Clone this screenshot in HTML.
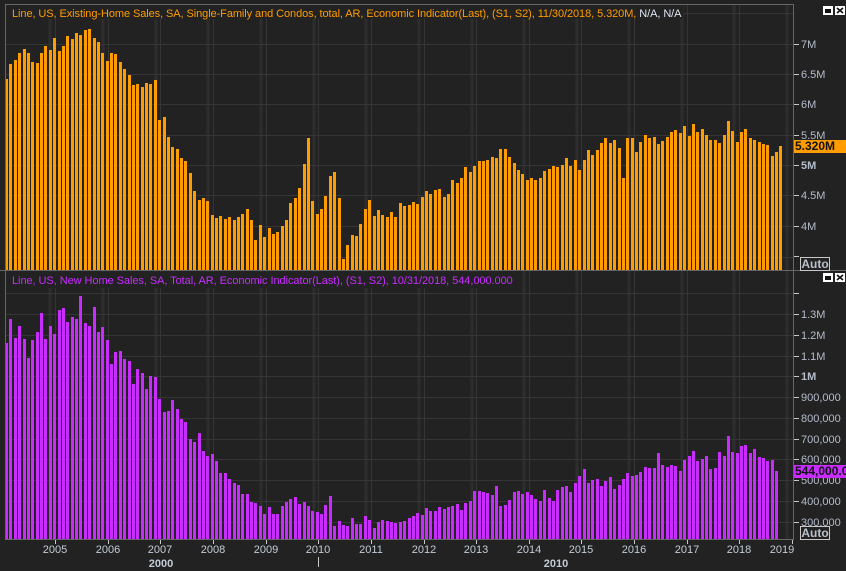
<!DOCTYPE html>
<html><head><meta charset="utf-8"><style>
html,body{margin:0;padding:0;background:#222}
body{width:846px;height:567px;position:relative;overflow:hidden;font:11px "Liberation Sans",sans-serif;color:#b4bccb}
svg{position:absolute;left:0;top:0}
.b{position:absolute;left:5.014px;top:0;display:flex;width:800px}
.b i{display:block;flex:none;width:4.386px;box-sizing:border-box;border-left:3px solid}
.o i{border-color:#ff9c00}.p i{border-color:#c82cff}
.t{position:absolute;white-space:pre;line-height:13px;background:#222;padding-right:2px}
.l{position:absolute;left:801px;white-space:pre;line-height:13px}
.y{position:absolute;top:544px;width:40px;text-align:center;line-height:13px;color:#c3ccd6}
.m{position:absolute;top:558px;width:40px;text-align:center;line-height:13px;font-weight:bold;color:#c3ccd6}
.tag{position:absolute;left:794px;width:51px;height:13px;overflow:hidden;line-height:13px;color:#111;font-weight:bold;font-size:12px;white-space:pre;padding-left:1px}
.au{position:absolute;left:800px;width:28px;height:12px;border:1px solid #c8c8c8;line-height:12px;text-align:center;font-weight:bold;font-size:12px;color:#b9c1cc;background:#222}
</style></head><body>
<svg width="846" height="567" shape-rendering="crispEdges" fill="none">
<path stroke="#2d2d2d" stroke-width="3" d="M50 5V270M103 5V270M156 5V270M208 5V270M261 5V270M314 5V270M366 5V270M419 5V270M472 5V270M524 5V270M577 5V270M629 5V270M682 5V270M734 5V270M787 5V270M50 271V539M103 271V539M156 271V539M208 271V539M261 271V539M314 271V539M366 271V539M419 271V539M472 271V539M524 271V539M577 271V539M629 271V539M682 271V539M734 271V539M787 271V539"/>
<path stroke="#353535" d="M55.5 5V539M108.5 5V539M160.5 5V539M213.5 5V539M266.5 5V539M318.5 5V539M371.5 5V539M424.5 5V539M476.5 5V539M529.5 5V539M581.5 5V539M634.5 5V539M687.5 5V539M739.5 5V539M6 13.5H793M6 44.5H793M6 74.5H793M6 104.5H793M6 135.5H793M6 165.5H793M6 195.5H793M6 226.5H793M6 257.5H793M6 293.5H793M6 314.5H793M6 335.5H793M6 356.5H793M6 376.5H793M6 397.5H793M6 418.5H793M6 439.5H793M6 459.5H793M6 480.5H793M6 501.5H793M6 522.5H793"/>
</svg>
<div class="t" style="left:5px;top:5px;height:14px;width:678px;padding:0"></div>
<div class="t" style="left:5px;top:272px;height:16px;width:510px;padding:0"></div>
<div class="b o" style="height:270px"><i style=margin-top:79px></i><i style=margin-top:64px></i><i style=margin-top:60px></i><i style=margin-top:53px></i><i style=margin-top:49px></i><i style=margin-top:53px></i><i style=margin-top:62px></i><i style=margin-top:63px></i><i style=margin-top:53px></i><i style=margin-top:46px></i><i style=margin-top:50px></i><i style=margin-top:38px></i><i style=margin-top:51px></i><i style=margin-top:46px></i><i style=margin-top:36px></i><i style=margin-top:39px></i><i style=margin-top:33px></i><i style=margin-top:35px></i><i style=margin-top:30px></i><i style=margin-top:29px></i><i style=margin-top:38px></i><i style=margin-top:42px></i><i style=margin-top:53px></i><i style=margin-top:61px></i><i style=margin-top:53px></i><i style=margin-top:54px></i><i style=margin-top:62px></i><i style=margin-top:69px></i><i style=margin-top:75px></i><i style=margin-top:85px></i><i style=margin-top:84px></i><i style=margin-top:87px></i><i style=margin-top:83px></i><i style=margin-top:84px></i><i style=margin-top:80px></i><i style=margin-top:120px></i><i style=margin-top:117px></i><i style=margin-top:137px></i><i style=margin-top:147px></i><i style=margin-top:149px></i><i style=margin-top:158px></i><i style=margin-top:161px></i><i style=margin-top:173px></i><i style=margin-top:191px></i><i style=margin-top:200px></i><i style=margin-top:198px></i><i style=margin-top:201px></i><i style=margin-top:215px></i><i style=margin-top:218px></i><i style=margin-top:216px></i><i style=margin-top:219px></i><i style=margin-top:217px></i><i style=margin-top:220px></i><i style=margin-top:217px></i><i style=margin-top:214px></i><i style=margin-top:209px></i><i style=margin-top:220px></i><i style=margin-top:240px></i><i style=margin-top:225px></i><i style=margin-top:237px></i><i style=margin-top:228px></i><i style=margin-top:234px></i><i style=margin-top:232px></i><i style=margin-top:226px></i><i style=margin-top:220px></i><i style=margin-top:203px></i><i style=margin-top:198px></i><i style=margin-top:188px></i><i style=margin-top:164px></i><i style=margin-top:138px></i><i style=margin-top:201px></i><i style=margin-top:214px></i><i style=margin-top:209px></i><i style=margin-top:196px></i><i style=margin-top:176px></i><i style=margin-top:172px></i><i style=margin-top:198px></i><i style=margin-top:259px></i><i style=margin-top:245px></i><i style=margin-top:235px></i><i style=margin-top:236px></i><i style=margin-top:224px></i><i style=margin-top:209px></i><i style=margin-top:200px></i><i style=margin-top:216px></i><i style=margin-top:210px></i><i style=margin-top:215px></i><i style=margin-top:217px></i><i style=margin-top:212px></i><i style=margin-top:217px></i><i style=margin-top:203px></i><i style=margin-top:206px></i><i style=margin-top:205px></i><i style=margin-top:202px></i><i style=margin-top:204px></i><i style=margin-top:197px></i><i style=margin-top:191px></i><i style=margin-top:194px></i><i style=margin-top:190px></i><i style=margin-top:189px></i><i style=margin-top:197px></i><i style=margin-top:194px></i><i style=margin-top:180px></i><i style=margin-top:183px></i><i style=margin-top:178px></i><i style=margin-top:167px></i><i style=margin-top:172px></i><i style=margin-top:166px></i><i style=margin-top:161px></i><i style=margin-top:161px></i><i style=margin-top:160px></i><i style=margin-top:157px></i><i style=margin-top:158px></i><i style=margin-top:149px></i><i style=margin-top:149px></i><i style=margin-top:157px></i><i style=margin-top:163px></i><i style=margin-top:170px></i><i style=margin-top:174px></i><i style=margin-top:180px></i><i style=margin-top:178px></i><i style=margin-top:180px></i><i style=margin-top:178px></i><i style=margin-top:171px></i><i style=margin-top:169px></i><i style=margin-top:166px></i><i style=margin-top:167px></i><i style=margin-top:165px></i><i style=margin-top:158px></i><i style=margin-top:166px></i><i style=margin-top:160px></i><i style=margin-top:170px></i><i style=margin-top:160px></i><i style=margin-top:150px></i><i style=margin-top:155px></i><i style=margin-top:150px></i><i style=margin-top:143px></i><i style=margin-top:138px></i><i style=margin-top:143px></i><i style=margin-top:140px></i><i style=margin-top:148px></i><i style=margin-top:178px></i><i style=margin-top:138px></i><i style=margin-top:138px></i><i style=margin-top:152px></i><i style=margin-top:142px></i><i style=margin-top:135px></i><i style=margin-top:138px></i><i style=margin-top:137px></i><i style=margin-top:144px></i><i style=margin-top:141px></i><i style=margin-top:137px></i><i style=margin-top:132px></i><i style=margin-top:130px></i><i style=margin-top:133px></i><i style=margin-top:126px></i><i style=margin-top:136px></i><i style=margin-top:124px></i><i style=margin-top:132px></i><i style=margin-top:129px></i><i style=margin-top:135px></i><i style=margin-top:140px></i><i style=margin-top:140px></i><i style=margin-top:143px></i><i style=margin-top:135px></i><i style=margin-top:121px></i><i style=margin-top:131px></i><i style=margin-top:142px></i><i style=margin-top:132px></i><i style=margin-top:129px></i><i style=margin-top:138px></i><i style=margin-top:140px></i><i style=margin-top:142px></i><i style=margin-top:144px></i><i style=margin-top:145px></i><i style=margin-top:156px></i><i style=margin-top:152px></i><i style=margin-top:146px></i></div>
<div class="b p" style="height:539px"><i style=margin-top:343px></i><i style=margin-top:319px></i><i style=margin-top:338px></i><i style=margin-top:326px></i><i style=margin-top:339px></i><i style=margin-top:358px></i><i style=margin-top:340px></i><i style=margin-top:332px></i><i style=margin-top:313px></i><i style=margin-top:339px></i><i style=margin-top:326px></i><i style=margin-top:334px></i><i style=margin-top:310px></i><i style=margin-top:308px></i><i style=margin-top:322px></i><i style=margin-top:317px></i><i style=margin-top:319px></i><i style=margin-top:296px></i><i style=margin-top:323px></i><i style=margin-top:326px></i><i style=margin-top:307px></i><i style=margin-top:332px></i><i style=margin-top:327px></i><i style=margin-top:340px></i><i style=margin-top:364px></i><i style=margin-top:352px></i><i style=margin-top:351px></i><i style=margin-top:359px></i><i style=margin-top:361px></i><i style=margin-top:384px></i><i style=margin-top:369px></i><i style=margin-top:373px></i><i style=margin-top:389px></i><i style=margin-top:376px></i><i style=margin-top:377px></i><i style=margin-top:399px></i><i style=margin-top:412px></i><i style=margin-top:411px></i><i style=margin-top:400px></i><i style=margin-top:409px></i><i style=margin-top:419px></i><i style=margin-top:422px></i><i style=margin-top:439px></i><i style=margin-top:442px></i><i style=margin-top:433px></i><i style=margin-top:451px></i><i style=margin-top:456px></i><i style=margin-top:454px></i><i style=margin-top:461px></i><i style=margin-top:473px></i><i style=margin-top:473px></i><i style=margin-top:479px></i><i style=margin-top:483px></i><i style=margin-top:485px></i><i style=margin-top:494px></i><i style=margin-top:494px></i><i style=margin-top:502px></i><i style=margin-top:503px></i><i style=margin-top:506px></i><i style=margin-top:514px></i><i style=margin-top:507px></i><i style=margin-top:514px></i><i style=margin-top:514px></i><i style=margin-top:506px></i><i style=margin-top:502px></i><i style=margin-top:499px></i><i style=margin-top:497px></i><i style=margin-top:504px></i><i style=margin-top:502px></i><i style=margin-top:506px></i><i style=margin-top:511px></i><i style=margin-top:512px></i><i style=margin-top:514px></i><i style=margin-top:505px></i><i style=margin-top:496px></i><i style=margin-top:526px></i><i style=margin-top:521px></i><i style=margin-top:525px></i><i style=margin-top:526px></i><i style=margin-top:518px></i><i style=margin-top:524px></i><i style=margin-top:524px></i><i style=margin-top:516px></i><i style=margin-top:520px></i><i style=margin-top:528px></i><i style=margin-top:522px></i><i style=margin-top:520px></i><i style=margin-top:521px></i><i style=margin-top:522px></i><i style=margin-top:523px></i><i style=margin-top:522px></i><i style=margin-top:521px></i><i style=margin-top:518px></i><i style=margin-top:516px></i><i style=margin-top:513px></i><i style=margin-top:515px></i><i style=margin-top:508px></i><i style=margin-top:511px></i><i style=margin-top:511px></i><i style=margin-top:507px></i><i style=margin-top:509px></i><i style=margin-top:507px></i><i style=margin-top:506px></i><i style=margin-top:504px></i><i style=margin-top:510px></i><i style=margin-top:503px></i><i style=margin-top:501px></i><i style=margin-top:491px></i><i style=margin-top:491px></i><i style=margin-top:492px></i><i style=margin-top:493px></i><i style=margin-top:495px></i><i style=margin-top:486px></i><i style=margin-top:506px></i><i style=margin-top:505px></i><i style=margin-top:500px></i><i style=margin-top:492px></i><i style=margin-top:491px></i><i style=margin-top:494px></i><i style=margin-top:492px></i><i style=margin-top:495px></i><i style=margin-top:499px></i><i style=margin-top:501px></i><i style=margin-top:490px></i><i style=margin-top:498px></i><i style=margin-top:501px></i><i style=margin-top:490px></i><i style=margin-top:487px></i><i style=margin-top:486px></i><i style=margin-top:492px></i><i style=margin-top:483px></i><i style=margin-top:476px></i><i style=margin-top:469px></i><i style=margin-top:483px></i><i style=margin-top:480px></i><i style=margin-top:479px></i><i style=margin-top:486px></i><i style=margin-top:481px></i><i style=margin-top:477px></i><i style=margin-top:489px></i><i style=margin-top:485px></i><i style=margin-top:479px></i><i style=margin-top:473px></i><i style=margin-top:476px></i><i style=margin-top:475px></i><i style=margin-top:472px></i><i style=margin-top:467px></i><i style=margin-top:468px></i><i style=margin-top:468px></i><i style=margin-top:453px></i><i style=margin-top:465px></i><i style=margin-top:467px></i><i style=margin-top:465px></i><i style=margin-top:466px></i><i style=margin-top:471px></i><i style=margin-top:460px></i><i style=margin-top:456px></i><i style=margin-top:451px></i><i style=margin-top:461px></i><i style=margin-top:459px></i><i style=margin-top:456px></i><i style=margin-top:469px></i><i style=margin-top:468px></i><i style=margin-top:452px></i><i style=margin-top:456px></i><i style=margin-top:436px></i><i style=margin-top:452px></i><i style=margin-top:453px></i><i style=margin-top:446px></i><i style=margin-top:445px></i><i style=margin-top:453px></i><i style=margin-top:449px></i><i style=margin-top:457px></i><i style=margin-top:458px></i><i style=margin-top:461px></i><i style=margin-top:460px></i><i style=margin-top:471px></i></div>
<svg width="846" height="567" shape-rendering="crispEdges" fill="none">
<path stroke="#666" d="M5.5 4V540M5 4.5H794M793.5 4V540M0 270.5H846M5 539.5H794"/>
<path stroke="#c8c8c8" d="M794 44.5H799M794 74.5H799M794 104.5H799M794 135.5H799M794 165.5H799M794 195.5H799M794 226.5H799M794 256.5H799M794 293.5H799M794 314.5H799M794 335.5H799M794 356.5H799M794 376.5H799M794 397.5H799M794 418.5H799M794 439.5H799M794 459.5H799M794 480.5H799M794 501.5H799M794 522.5H799M55.5 540V544M108.5 540V544M160.5 540V544M213.5 540V544M266.5 540V544M318.5 540V544M371.5 540V544M424.5 540V544M476.5 540V544M529.5 540V544M581.5 540V544M634.5 540V544M687.5 540V544M739.5 540V544M792.5 540V544M318.5 557V567"/>
<rect x="823" y="6" width="10" height="9" fill="#fff"/><rect x="825" y="9" width="6" height="4" fill="#111"/>
<rect x="835" y="6" width="10" height="9" fill="#fff"/><path d="M837 8L843 13M843 8L837 13" stroke="#111" stroke-width="1.6" shape-rendering="auto"/>
<rect x="823" y="273" width="10" height="9" fill="#fff"/><rect x="825" y="276" width="6" height="4" fill="#111"/>
<rect x="835" y="273" width="10" height="9" fill="#fff"/><path d="M837 275L843 280M843 275L837 280" stroke="#111" stroke-width="1.6" shape-rendering="auto"/>
</svg>
<div class="t" style="left:12px;top:8px;background:none;color:#ff9c00;letter-spacing:-.08px">Line, US, Existing-Home Sales, SA, Single-Family and Condos, total, AR, Economic Indicator(Last), (S1, S2), 11/30/2018, 5.320M, <span style="color:#dfe6f2">N/A, N/A</span></div>
<div class="t" style="left:12px;top:275px;background:none;color:#c82cff;letter-spacing:-.06px">Line, US, New Home Sales, SA, Total, AR, Economic Indicator(Last), (S1, S2), 10/31/2018, 544,000.000</div>
<div class="l" style="top:39px">7M</div>
<div class="l" style="top:69px">6.5M</div>
<div class="l" style="top:99px">6M</div>
<div class="l" style="top:130px">5.5M</div>
<div class="l" style="top:160px;font-weight:bold">5M</div>
<div class="l" style="top:190px">4.5M</div>
<div class="l" style="top:221px">4M</div>
<div class="l" style="top:309px">1.3M</div>
<div class="l" style="top:330px">1.2M</div>
<div class="l" style="top:351px">1.1M</div>
<div class="l" style="top:371px;font-weight:bold">1M</div>
<div class="l" style="top:392px">900,000</div>
<div class="l" style="top:413px">800,000</div>
<div class="l" style="top:434px">700,000</div>
<div class="l" style="top:454px">600,000</div>
<div class="l" style="top:475px">500,000</div>
<div class="l" style="top:496px">400,000</div>
<div class="l" style="top:517px">300,000</div>
<div class="tag" style="top:140px;background:#ff9c00">5.320M</div>
<div class="tag" style="top:465px;background:#c82cff">544,000.000</div>
<div class="au" style="top:257px">Auto</div>
<div class="au" style="top:526px">Auto</div>
<div class="y" style="left:35px">2005</div>
<div class="y" style="left:88px">2006</div>
<div class="y" style="left:140px">2007</div>
<div class="y" style="left:193px">2008</div>
<div class="y" style="left:246px">2009</div>
<div class="y" style="left:298px">2010</div>
<div class="y" style="left:351px">2011</div>
<div class="y" style="left:404px">2012</div>
<div class="y" style="left:456px">2013</div>
<div class="y" style="left:509px">2014</div>
<div class="y" style="left:561px">2015</div>
<div class="y" style="left:614px">2016</div>
<div class="y" style="left:667px">2017</div>
<div class="y" style="left:719px">2018</div>
<div class="y" style="left:762px">2019</div>
<div class="m" style="left:141px">2000</div>
<div class="m" style="left:536px">2010</div>
</body></html>
